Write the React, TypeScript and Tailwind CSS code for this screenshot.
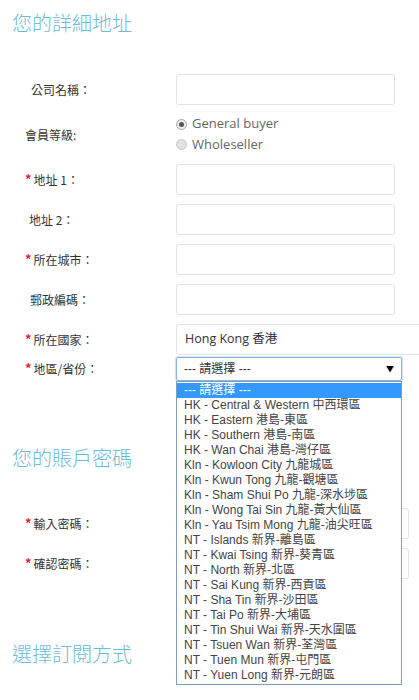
import React from 'react';

const cjk = "font-['Noto_Sans_CJK_TC','Noto_Sans',sans-serif]";

const regions: string[] = [
  '--- 請選擇 ---',
  'HK - Central & Western 中西環區',
  'HK - Eastern 港島-東區',
  'HK - Southern 港島-南區',
  'HK - Wan Chai 港島-灣仔區',
  'Kln - Kowloon City 九龍城區',
  'Kln - Kwun Tong 九龍-觀塘區',
  'Kln - Sham Shui Po 九龍-深水埗區',
  'Kln - Wong Tai Sin 九龍-黃大仙區',
  'Kln - Yau Tsim Mong 九龍-油尖旺區',
  'NT - Islands 新界-離島區',
  'NT - Kwai Tsing 新界-葵青區',
  'NT - North 新界-北區',
  'NT - Sai Kung 新界-西貢區',
  'NT - Sha Tin 新界-沙田區',
  'NT - Tai Po 新界-大埔區',
  'NT - Tin Shui Wai 新界-天水圍區',
  'NT - Tsuen Wan 新界-荃灣區',
  'NT - Tuen Mun 新界-屯門區',
  'NT - Yuen Long 新界-元朗區'
];

const Label = ({ text, required, pad }: { text: string; required?: boolean; pad: string }) => (
  <div className={`w-[176px] shrink-0 flex items-center text-[12px] text-[#333] ${pad}`}>
    {required && <span className="text-[#e0262b] text-[13px] font-bold mr-[2px] -mt-[2px]">*</span>}
    <span>{text}</span>
  </div>
);

const Field = ({ label, required, pad }: { label: string; required?: boolean; pad: string }) => (
  <div className="flex items-center h-[31px]">
    <Label text={label} required={required} pad={pad} />
    <div className="w-[219px] h-[31px] border border-[#e3e3e3] rounded-[3px] bg-white" />
  </div>
);

const Heading = ({ children, className }: { children: React.ReactNode; className: string }) => (
  <h2 className={`pl-3 text-[20px] leading-[24px] font-extralight text-[#6cbcd7] ${className}`}>{children}</h2>
);

const App = () => {
  return (
    <div className={`relative w-[419px] h-[700px] overflow-hidden bg-white ${cjk}`}>
      <Heading className="pt-[11px]">您的詳細地址</Heading>

      <div className="mt-[39px] flex flex-col gap-[9px]">
        <Field label="公司名稱：" pad="pl-[31px]" />

        <div className="flex items-center h-[41px]">
          <Label text="會員等級:" pad="pl-[25px]" />
          <div className="flex flex-col font-['Open_Sans',sans-serif] text-[13px] text-[#666]">
            <div className="flex items-center gap-[5px] h-[20px]">
              <span className="w-[11px] h-[11px] rounded-full border border-[#a8a8a8] bg-[#eee] flex items-center justify-center">
                <span className="w-[5px] h-[5px] rounded-full bg-[#555]" />
              </span>
              <span>General buyer</span>
            </div>
            <div className="flex items-center gap-[5px] h-[21px]">
              <span className="w-[11px] h-[11px] rounded-full border border-[#c8c8c8] bg-[#e2e2e2]" />
              <span>Wholeseller</span>
            </div>
          </div>
        </div>

        <Field label="地址 1：" required pad="pl-[25px]" />
        <Field label="地址 2：" pad="pl-[29px]" />
        <Field label="所在城市：" required pad="pl-[25px]" />
        <Field label="郵政編碼：" pad="pl-[30px]" />

        <div className="flex items-center h-[31px]">
          <Label text="所在國家：" required pad="pl-[25px]" />
          <div className="w-[260px] shrink-0 h-[31px] border border-[#e3e3e3] rounded-[3px] pl-[8px] flex items-center text-[12.5px] text-[#333]">
            <span className="font-['Open_Sans','Noto_Sans_CJK_TC',sans-serif]">Hong Kong 香港</span>
          </div>
        </div>
      </div>

      <div className="mt-[2px] flex items-center h-[24px]">
        <Label text="地區/省份：" required pad="pl-[25px]" />
        <div className="w-[226px] h-[24px] border border-[#8fb1e2] rounded-[2px] shadow-[0_0_0_1px_#d3e1f5] pl-[7px] pr-[7px] flex items-center justify-between text-[12px] text-[#333]">
          <span className="font-['Liberation_Sans','Noto_Sans_CJK_TC',sans-serif]">--- 請選擇 ---</span>
          <span className="text-[8px] text-black">▼</span>
        </div>
      </div>

      <Heading className="mt-[65px]">您的賬戶密碼</Heading>

      <div className="mt-[38px] flex flex-col gap-[9px]">
        <div className="flex items-center h-[31px]">
          <Label text="輸入密碼：" required pad="pl-[25px]" />
          <div className="w-[233px] h-[31px] border border-[#e3e3e3] rounded-[3px]" />
        </div>
        <div className="flex items-center h-[31px]">
          <Label text="確認密碼：" required pad="pl-[25px]" />
          <div className="w-[233px] h-[31px] border border-[#e3e3e3] rounded-[3px]" />
        </div>
      </div>

      <Heading className="mt-[63px]">選擇訂閱方式</Heading>

      <ul className="absolute left-[176px] top-[381px] w-[226px] border border-[#7f9db9] bg-white py-[1px] font-['Liberation_Sans','Noto_Sans_CJK_TC',sans-serif] text-[12px] text-[#444]">
        {regions.map((r, i) => (
          <li
            key={r}
            className={
              i === 0
                ? 'h-[15px] leading-[15px] pl-[7px] whitespace-nowrap bg-[#3399ff] text-white'
                : 'h-[15px] leading-[15px] pl-[7px] whitespace-nowrap'
            }
          >
            {r}
          </li>
        ))}
      </ul>
    </div>
  );
};

export default App;
